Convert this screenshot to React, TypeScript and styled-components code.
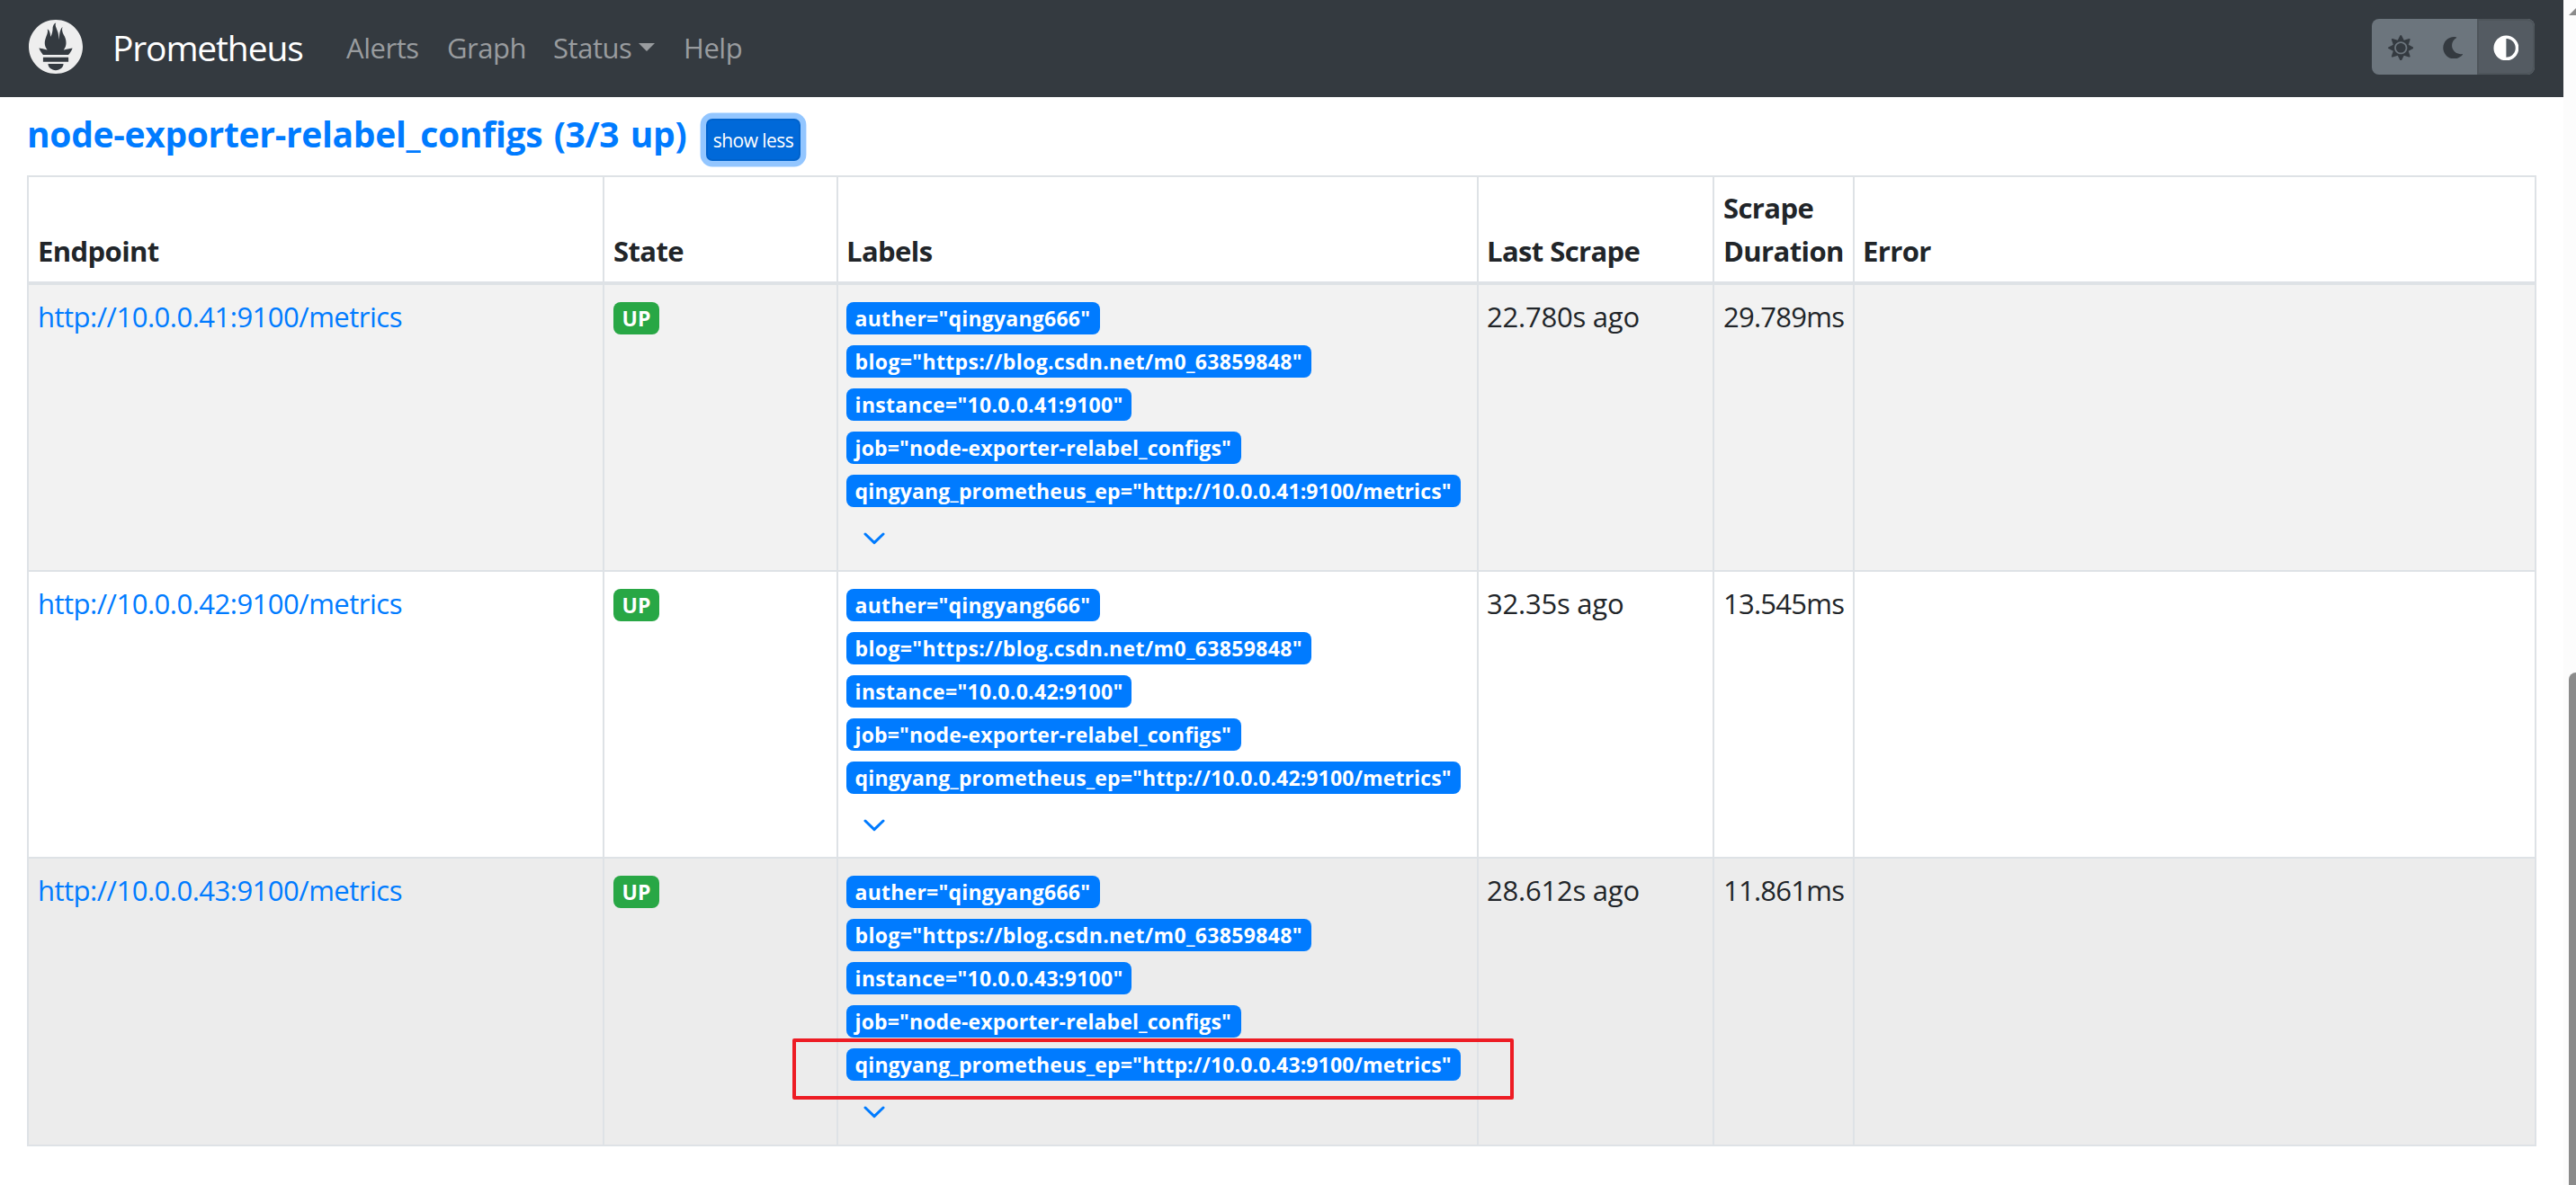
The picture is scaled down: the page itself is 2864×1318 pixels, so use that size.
import React from "react";
import styled, { createGlobalStyle } from "styled-components";
import { FaSun, FaMoon, FaAdjust } from "react-icons/fa";

const Global = createGlobalStyle`
  * { box-sizing: border-box; }
  html { font-size: 32px; }
  body { margin: 0; background: #fff; color: #212529; overflow: hidden;
    font-family: "Open Sans", "Noto Sans", sans-serif; font-size: 31px; line-height: 48px; }
`;

const Viewport = styled.div`
  display: flex;
  height: 1318px;
`;

const Page = styled.div`
  flex: 1;
  min-width: 0;
`;

const Navbar = styled.nav`
  display: flex;
  align-items: center;
  height: 108px;
  padding: 0 32px;
  background: #343a40;
`;

const Logo = styled.svg`
  width: 60px;
  height: 60px;
  margin: 0 33px 5px 0;
`;

const Sized = styled.span<{ $w: number }>`
  display: inline-block;
  white-space: nowrap;
  width: ${(p) => p.$w}px;
`;

const Brand = styled(Sized)`
  color: #fff;
  font-size: 39px;
  letter-spacing: -1.15px;
  margin: 0 49px 3px 0;
`;

const NavItem = styled(Sized)`
  color: #999c9f;
  letter-spacing: -0.45px;
  margin: 0 32px 2px 0;
`;

const Caret = styled.span`
  display: inline-block;
  margin-left: 8px;
  vertical-align: 8px;
  border-top: 9.6px solid;
  border-left: 9.6px solid transparent;
  border-right: 9.6px solid transparent;
`;

const ThemeGroup = styled.div`
  display: flex;
  width: 181px;
  height: 62px;
  margin: 0 0 4px auto;
  border-radius: 8px;
  overflow: hidden;
  background: #6c757d;
`;

const ThemeButton = styled.span<{ $active?: boolean; $w: number }>`
  display: flex;
  align-items: center;
  justify-content: center;
  width: ${(p) => p.$w}px;
  padding-top: 2px;
  color: ${(p) => (p.$active ? "#fff" : "#343a40")};
  background: ${(p) => (p.$active ? "#545b62" : "transparent")};
  border: ${(p) => (p.$active ? "2px solid #4e555b" : "0")};
  border-radius: ${(p) => (p.$active ? "0 8px 8px 0" : "0")};
`;

const Content = styled.main`
  padding: 14px 30px 0;
`;

const Heading = styled.h2`
  display: flex;
  height: 73px;
  margin: 0;
  font-size: 39px;
  font-weight: 700;
  line-height: 54px;
  color: #007bff;
`;

const Title = styled(Sized)`
  letter-spacing: -0.32px;
  word-spacing: 2.6px;
`;

const ShowLess = styled.button`
  width: 105px;
  height: 47px;
  margin: 10px 0 0 24px;
  padding: 0;
  color: #fff;
  background: #0069d9;
  border: 2px solid #0062cc;
  border-radius: 7px;
  box-shadow: 0 0 0 6.4px #93c6ff;
  font: 400 21px/44px "Open Sans", sans-serif;
  letter-spacing: -0.55px;
  white-space: nowrap;
`;

const Table = styled.table`
  width: 2790px;
  table-layout: fixed;
  border-collapse: collapse;
`;

const Th = styled.th<{ $pad: number }>`
  height: 119px;
  padding: 9px 8px 10px ${(p) => p.$pad}px;
  text-align: left;
  vertical-align: bottom;
  border: 2px solid #dee2e6;
  border-bottom-width: 4px;
  letter-spacing: -0.6px;
`;

const Row = styled.tr<{ $bg: string; $h: number }>`
  height: ${(p) => p.$h}px;
  background: ${(p) => p.$bg};
`;

const Td = styled.td<{ $pad?: number; $track?: number }>`
  padding: 11px 8px 0 ${(p) => p.$pad ?? 9}px;
  vertical-align: top;
  border: 2px solid #dee2e6;
  letter-spacing: ${(p) => p.$track ?? -0.5}px;
`;

const Link = styled.a`
  color: #007bff;
`;

const Badge = styled.span<{ $w: number; $color: string; $track?: number }>`
  display: block;
  width: ${(p) => p.$w}px;
  height: 36px;
  margin: 8px 0 12px;
  padding: 0 9.6px;
  border-radius: 8px;
  background: ${(p) => p.$color};
  color: #fff;
  font-size: 23px;
  font-weight: 700;
  line-height: 37px;
  letter-spacing: ${(p) => p.$track ?? 0}px;
  white-space: nowrap;
`;

const Expand = styled.div`
  display: flex;
  padding: 16px 0 0 19px;
`;

const Scrollbar = styled.div`
  width: 14px;
  padding: 7px 0 0 6px;
  background: #fcfcfc;
  overflow: hidden;
`;

const ScrollArrow = styled.div`
  width: 20px;
  height: 10px;
  background: #8b8b8b;
  clip-path: polygon(50% 0, 100% 100%, 0 100%);
`;

const ScrollThumb = styled.div`
  width: 16px;
  height: 600px;
  margin-top: 731px;
  border-radius: 8px;
  background: #8b8b8b;
`;

const Marker = styled.div`
  position: absolute;
  left: 881px;
  top: 1155px;
  width: 802px;
  height: 68px;
  border: 4px solid #ed1c24;
  border-radius: 2px;
`;

const Chevron = () => (
  <svg width="24" height="14" viewBox="0 0 24 14" fill="none" stroke="#007bff" strokeWidth="3" strokeLinecap="round" strokeLinejoin="round">
    <path d="M2 2L12 11.7L22 2" />
  </svg>
);

const columns = [
  { title: "Endpoint", width: 640, pad: 10 },
  { title: "State", width: 260, pad: 10 },
  { title: "Labels", width: 712, pad: 9 },
  { title: "Last Scrape", width: 262, pad: 9 },
  { title: "Scrape Duration", width: 156, pad: 10 },
  { title: "Error", width: 758, pad: 9 },
];

const targets = [
  { ip: "10.0.0.41:9100", last: "22.780s ago", dur: "29.789ms", bg: "#f2f2f2", h: 320 },
  { ip: "10.0.0.42:9100", last: "32.35s ago", dur: "13.545ms", bg: "#ffffff", h: 319 },
  { ip: "10.0.0.43:9100", last: "28.612s ago", dur: "11.861ms", bg: "#ececec", h: 320 },
];

const labelsOf = (ip: string) => [
  { text: `auther="qingyang666"`, width: 282, track: 0.22 },
  { text: `blog="https://blog.csdn.net/m0_63859848"`, width: 517, track: 0.34 },
  { text: `instance="${ip}"`, width: 317, track: 0.3 },
  { text: `job="node-exporter-relabel_configs"`, width: 439, track: 0.12 },
  { text: `qingyang_prometheus_ep="http://${ip}/metrics"`, width: 683, track: 0.12 },
];

export default function App() {
  return (
    <>
      <Global />
      <Viewport>
        <Page>
          <Navbar>
            <Logo viewBox="0 0.667 113.333 113.333">
              <path
                fill="#eee"
                d="M56.667,0.667C25.372,0.667,0,26.036,0,57.332c0,31.295,25.372,56.666,56.667,56.666s56.666-25.371,56.666-56.666C113.333,26.036,87.961,0.667,56.667,0.667z M56.667,106.722c-8.904,0-16.123-5.948-16.123-13.283H72.79C72.79,100.773,65.571,106.722,56.667,106.722z M83.297,89.04H30.034v-9.658h53.264V89.04z M83.106,74.411h-52.92c-0.176-0.203-0.356-0.403-0.526-0.609c-5.452-6.62-6.736-10.076-7.983-13.598c-0.021-0.116,6.611,1.355,11.314,2.413c0,0,2.42,0.56,5.958,1.205c-3.397-3.982-5.414-9.044-5.414-14.218c0-11.359,8.712-21.285,5.569-29.308c3.059,0.249,6.331,6.456,6.552,16.161c3.252-4.494,4.613-12.701,4.613-17.733c0-5.21,3.433-11.262,6.867-11.469c-3.061,5.045,0.793,9.37,4.219,20.099c1.285,4.03,1.121,10.812,2.113,15.113C63.797,33.534,65.333,20.5,71,16c-2.5,5.667,0.37,12.758,2.333,16.167c3.167,5.5,5.087,9.667,5.087,17.548c0,5.284-1.951,10.259-5.242,14.148c3.742-0.702,6.326-1.335,6.326-1.335l12.152-2.371C91.657,60.156,89.891,67.418,83.106,74.411z"
              />
            </Logo>
            <Brand $w={211}>Prometheus</Brand>
            <NavItem $w={80}>Alerts</NavItem>
            <NavItem $w={86}>Graph</NavItem>
            <NavItem $w={113}>Status<Caret /></NavItem>
            <NavItem $w={66}>Help</NavItem>
            <ThemeGroup>
              <ThemeButton $w={64}><FaSun size={28.5} /></ThemeButton>
              <ThemeButton $w={53}><FaMoon size={24.4} /></ThemeButton>
              <ThemeButton $w={64} $active><FaAdjust size={28.8} /></ThemeButton>
            </ThemeGroup>
          </Navbar>
          <Content>
            <Heading>
              <Title $w={731}>node-exporter-relabel_configs (3/3 up)</Title>
              <ShowLess>show less</ShowLess>
            </Heading>
            <Table>
              <colgroup>
                {columns.map((c) => <col key={c.title} style={{ width: c.width }} />)}
              </colgroup>
              <thead>
                <tr>{columns.map((c) => <Th key={c.title} $pad={c.pad}>{c.title}</Th>)}</tr>
              </thead>
              <tbody>
                {targets.map((t) => (
                  <Row key={t.ip} $bg={t.bg} $h={t.h}>
                    <Td $pad={10}><Link>{`http://${t.ip}/metrics`}</Link></Td>
                    <Td $pad={10}><Badge $w={51} $color="#28a745">UP</Badge></Td>
                    <Td>
                      {labelsOf(t.ip).map((l) => (
                        <Badge key={l.text} $w={l.width} $color="#007bff" $track={l.track}>{l.text}</Badge>
                      ))}
                      <Expand><Chevron /></Expand>
                    </Td>
                    <Td $track={-0.22}>{t.last}</Td>
                    <Td $pad={10} $track={-0.75}>{t.dur}</Td>
                    <Td />
                  </Row>
                ))}
              </tbody>
            </Table>
          </Content>
        </Page>
        <Scrollbar><ScrollArrow /><ScrollThumb /></Scrollbar>
      </Viewport>
      <Marker />
    </>
  );
}
